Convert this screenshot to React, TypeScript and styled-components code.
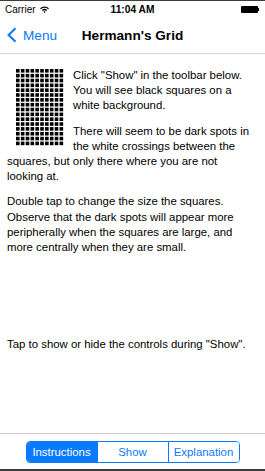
import React, { useState } from 'react'
import styled, { createGlobalStyle } from 'styled-components'

const blue = '#0a7aff'

const GlobalStyle = createGlobalStyle`
  html, body {
    margin: 0;
    padding: 0;
    background: #fff;
  }
  body {
    font-family: 'Liberation Sans', Arial, sans-serif;
    color: #000;
  }
`

const Screen = styled.div`
  width: 265px;
  height: 471px;
  box-sizing: border-box;
  border-top: 1px solid #3c3c3c;
  border-bottom: 2px solid #3c3c3c;
  display: flex;
  flex-direction: column;
  overflow: hidden;
  background: #fff;
`

const StatusBar = styled.div`
  height: 16px;
  display: grid;
  grid-template-columns: 1fr auto 1fr;
  align-items: center;
  padding: 0 5px;
  font-size: 10px;
`

const Carrier = styled.div`
  display: flex;
  align-items: center;
  gap: 4px;
`

const Clock = styled.div`
  font-weight: bold;
  font-size: 10.2px;
`

const Battery = styled.div`
  justify-self: end;
  display: flex;
  align-items: center;
  margin-right: 1px;
`

const BatteryBody = styled.div`
  width: 17px;
  height: 7px;
  background: #000;
  border-radius: 1px;
`

const BatteryNub = styled.div`
  width: 1.5px;
  height: 3px;
  background: #000;
`

const NavBar = styled.div`
  height: 36px;
  border-bottom: 1px solid #d6d6d6;
  display: grid;
  grid-template-columns: 1fr auto 1fr;
  align-items: center;
`

const BackButton = styled.a`
  display: flex;
  align-items: center;
  gap: 6px;
  padding-left: 7px;
  color: ${blue};
  font-size: 13.6px;
  cursor: pointer;
`

const Title = styled.div`
  font-weight: bold;
  font-size: 13.6px;
`

const Content = styled.div`
  flex: 1;
  padding: 14px 12.5px 0 7px;
  font-size: 11.4px;
  line-height: 15.2px;
`

const GridPicture = styled.svg`
  float: left;
  margin: 1px 9px 2px 9px;
`

const Paragraph = styled.p`
  margin: 0 0 10px;
`

const Hint = styled.p`
  margin: 82px 0 0;
  clear: both;
`

const Toolbar = styled.div`
  height: 35px;
  border-top: 1px solid #cfcfcf;
  display: flex;
  align-items: center;
  justify-content: center;
`

const Segments = styled.div`
  display: flex;
  width: 214px;
  height: 22px;
  box-sizing: border-box;
  border: 1px solid ${blue};
  border-radius: 4px;
  overflow: hidden;
  margin-top: 1px;
`

const Segment = styled.button<{ $active: boolean }>`
  flex: 1;
  border: none;
  border-left: 1px solid ${blue};
  padding: 0;
  font-family: 'Liberation Sans', Arial, sans-serif;
  font-size: 11.4px;
  background: ${(p) => (p.$active ? blue : '#fff')};
  color: ${(p) => (p.$active ? '#fff' : blue)};
  cursor: pointer;

  &:first-child {
    border-left: none;
  }
`

function HermannGrid() {
  const cols = 10
  const rows = 16
  const step = 4.84
  const size = 3.6
  const squares = []
  for (let r = 0; r < rows; r++) {
    for (let c = 0; c < cols; c++) {
      squares.push(
        <rect key={r + '-' + c} x={c * step} y={r * step} width={size} height={size} fill="#000" />
      )
    }
  }
  return (
    <GridPicture width="48" height="78" viewBox="0 0 48 78">
      {squares}
    </GridPicture>
  )
}

const tabs = ['Instructions', 'Show', 'Explanation']

export default function App() {
  const [tab, setTab] = useState('Instructions')

  return (
    <Screen>
      <GlobalStyle />
      <StatusBar>
        <Carrier>
          Carrier
          <svg width="9" height="7" viewBox="0 0 9 7">
            <path d="M0 2.2 A6.5 6.5 0 0 1 9 2.2 L8 3.2 A5 5 0 0 0 1 3.2 Z" fill="#000" />
            <path d="M1.8 4 A4 4 0 0 1 7.2 4 L6.2 5 A2.6 2.6 0 0 0 2.8 5 Z" fill="#000" />
            <path d="M3.4 5.7 A1.6 1.6 0 0 1 5.6 5.7 L4.5 6.9 Z" fill="#000" />
          </svg>
        </Carrier>
        <Clock>11:04 AM</Clock>
        <Battery>
          <BatteryBody />
          <BatteryNub />
        </Battery>
      </StatusBar>
      <NavBar>
        <BackButton>
          <svg width="10" height="16" viewBox="0 0 10 16">
            <polyline points="8.5,1.2 1.6,8 8.5,14.8" fill="none" stroke={blue} strokeWidth="2.1" />
          </svg>
          Menu
        </BackButton>
        <Title>Hermann's Grid</Title>
        <div />
      </NavBar>
      <Content>
        <HermannGrid />
        <Paragraph>
          Click "Show" in the toolbar below. You will see black squares on a white background.
        </Paragraph>
        <Paragraph>
          There will seem to be dark spots in the white crossings between the squares, but only
          there where you are not looking at.
        </Paragraph>
        <Paragraph>
          Double tap to change the size the squares. Observe that the dark spots will appear more
          peripherally when the squares are large, and more centrally when they are small.
        </Paragraph>
        <Hint>Tap to show or hide the controls during "Show".</Hint>
      </Content>
      <Toolbar>
        <Segments>
          {tabs.map((t) => (
            <Segment key={t} $active={tab === t} onClick={() => setTab(t)}>
              {t}
            </Segment>
          ))}
        </Segments>
      </Toolbar>
    </Screen>
  )
}
